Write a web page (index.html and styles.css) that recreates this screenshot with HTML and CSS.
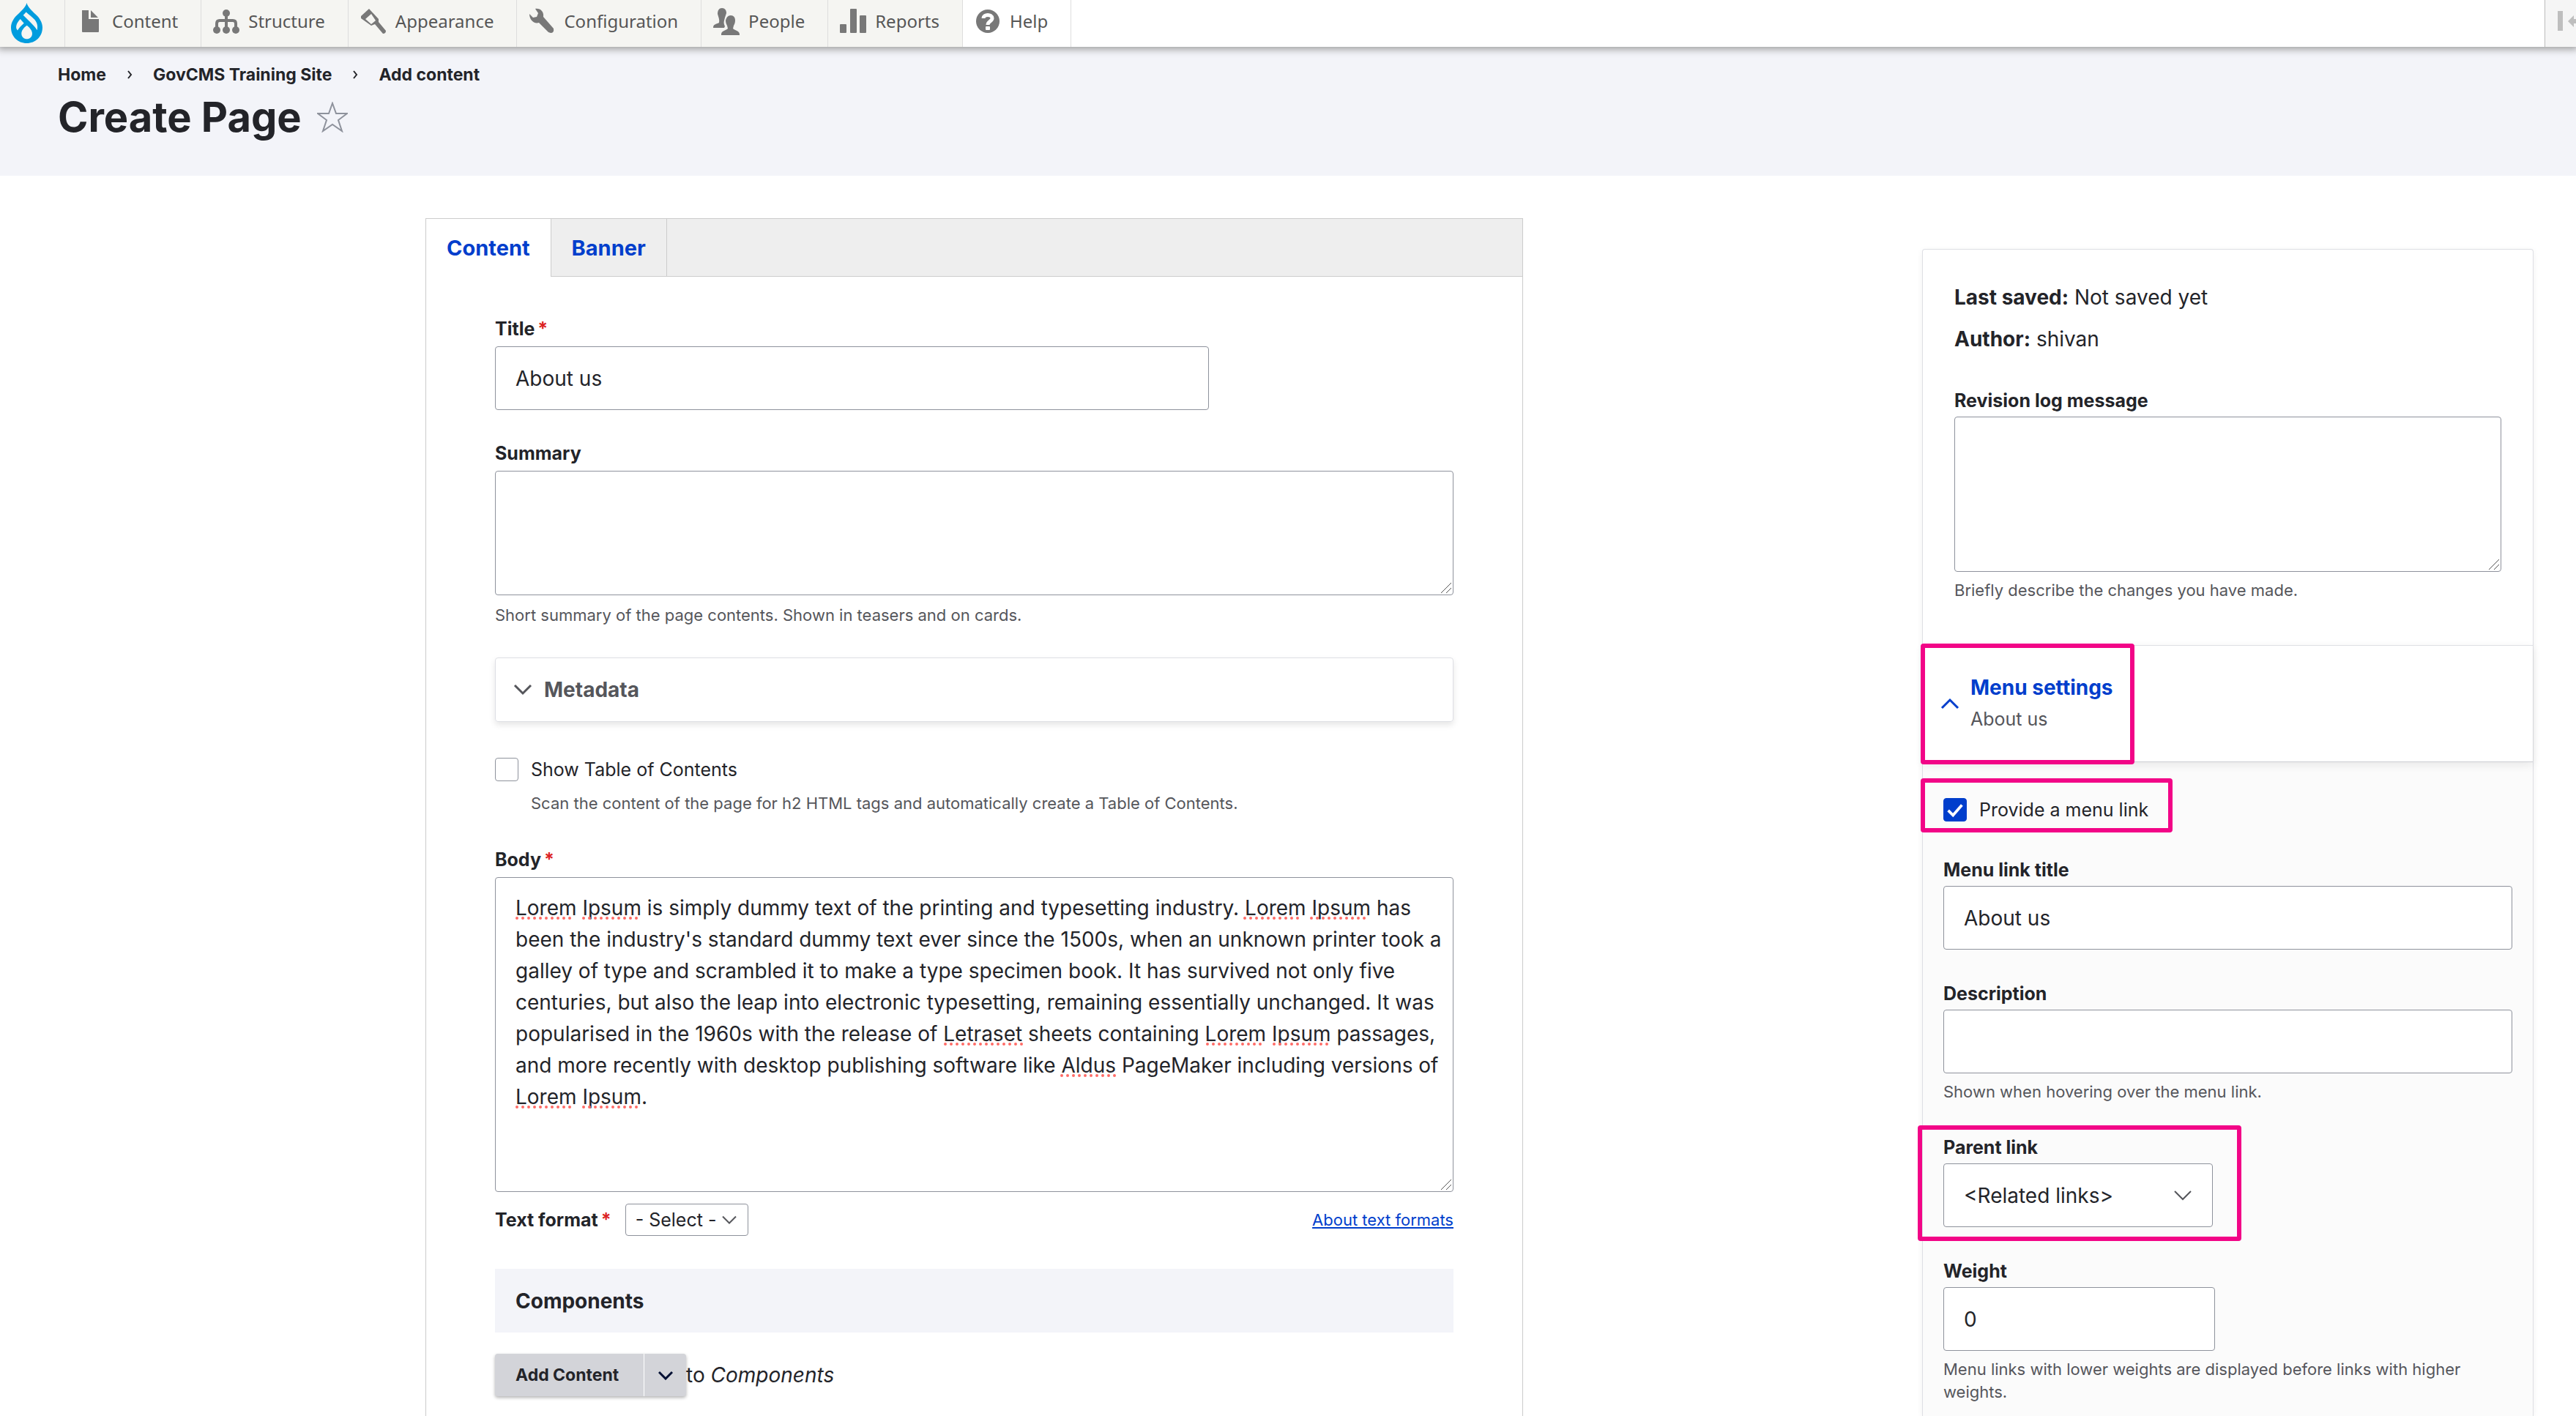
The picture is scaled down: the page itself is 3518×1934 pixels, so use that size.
FILE: index.html
```html
<!DOCTYPE html>
<html lang="en">
<head>
<meta charset="utf-8">
<meta name="viewport" content="width=device-width, initial-scale=1">
<title>Create Page</title>
<link rel="stylesheet" href="styles.css">
</head>
<body>
<nav class="toolbar" aria-label="Administration">
  <a class="toolbar-home" href="#" aria-label="Drupal">
    <svg class="logo" width="43" height="55" viewBox="0 0 43 55" aria-hidden="true"><path fill="#009cde" fill-rule="evenodd" d="M21.500 0C20 6 14 11 10 15C4 20 0 27 0 33.500C0 46 9.500 55 21.500 55S43 46 43 33.500C43 27 39 20 33 15C29 11 23 6 21.500 0ZM20.700 12.500C24 16 29 19 32.500 23C35.500 27 37 31 35.700 37.300C33 32 25 25 16.700 16.700ZM12.700 22L17.700 27.700C14 31 11 34 9 37.500C5.500 34 7 28 12.700 22ZM21.700 30.700C26 34 29 38 29 42C29 46.500 25.500 49.300 21.700 49.300S14.300 46.500 14.300 42C14.300 38 17 34 21.700 30.700Z"/></svg>
  </a>
  <a class="toolbar-item" href="#">
    <svg class="icon" width="36" height="36" viewBox="0 0 36 36" aria-hidden="true"><path fill="#787878" d="M7 3h9v12h14v17a1 1 0 0 1-1 1H8a1 1 0 0 1-1-1zM19 3l10 10H19z"/></svg>
    Content</a>
  <a class="toolbar-item" href="#">
    <svg class="icon" width="36" height="36" viewBox="0 0 36 36" aria-hidden="true"><g fill="#787878"><circle cx="18" cy="7" r="5"/><circle cx="5" cy="30" r="5"/><circle cx="18" cy="30" r="5"/><circle cx="31" cy="30" r="5"/></g><path fill="none" stroke="#787878" stroke-width="4" d="M18 9v20M5 28v-7q0-4 4-4h18q4 0 4 4v7"/></svg>
    Structure</a>
  <a class="toolbar-item" href="#">
    <svg class="icon" width="36" height="36" viewBox="0 0 36 36" aria-hidden="true"><path fill="#787878" fill-rule="evenodd" d="M12 1L25 15L25 19L35 31Q35 35 31 35L20 22L15 24L1 14L1 11ZM15 8L7 15L15 22L21 17Z"/></svg>
    Appearance</a>
  <a class="toolbar-item" href="#">
    <svg class="icon" width="36" height="36" viewBox="0 0 36 36" aria-hidden="true"><path fill="#787878" d="M9 1C16 0 21 5 20 12L34 28Q35 34 30 34L27 33L14 20C7 22 1 16 1 8L6 13L11 12L13 7Z"/></svg>
    Configuration</a>
  <a class="toolbar-item" href="#">
    <svg class="icon" width="36" height="38" viewBox="0 0 36 38" aria-hidden="true"><path fill="#787878" d="M12 1c4 0 6 3 6 7l-2 6-1 4c-1 3 0 6 1 8l-1 2H0c0-5 4-5 8-7 1-4-1-8-2-12 0-5 2-8 6-8z"/><path fill="#787878" d="M24 11c4 0 6 3 6 7 0 3-1 5-2 7l-1 4c3 3 9 3 9 8v1H11v-1c0-5 6-5 9-8l-1-4c-1-2-2-4-2-7 1-4 3-7 7-7z"/></svg>
    People</a>
  <a class="toolbar-item" href="#">
    <svg class="icon" width="36" height="36" viewBox="0 0 36 36" aria-hidden="true"><g fill="#787878"><rect y="22" width="9" height="12" rx="1"/><rect x="14" y="1" width="9" height="33" rx="1"/><rect x="27" y="10" width="9" height="24" rx="1"/></g></svg>
    Reports</a>
  <a class="toolbar-item toolbar-item-last" href="#">
    <svg class="icon" width="36" height="36" viewBox="0 0 36 36" aria-hidden="true"><circle cx="18" cy="18" r="16" fill="#787878"/><path fill="none" stroke="#fff" stroke-width="5" d="M12 14c0-6 12-6 12 0 0 4-6 4-6 9"/><rect x="15" y="25" width="6" height="5" rx="1" fill="#fff"/></svg>
    Help</a>
  <button class="toolbar-toggle" type="button" aria-label="Vertical orientation">
    <svg width="34" height="32" viewBox="0 0 34 32" aria-hidden="true"><path fill="#bebebe" d="M1 2h7v27H1zM15 16l8-8v5h11v6H23v5z"/></svg>
  </button>
</nav>

<header class="page-header">
  <nav class="breadcrumb" aria-label="Breadcrumb">
    <a href="#">Home</a>
    <svg class="crumb-sep" width="8" height="12" viewBox="0 0 8 12" aria-hidden="true"><path fill="none" stroke="#232429" stroke-width="2" d="M2 1l4 5-4 5"/></svg>
    <a href="#">GovCMS Training Site</a>
    <svg class="crumb-sep" width="8" height="12" viewBox="0 0 8 12" aria-hidden="true"><path fill="none" stroke="#232429" stroke-width="2" d="M2 1l4 5-4 5"/></svg>
    <a href="#">Add content</a>
  </nav>
  <div class="title-row">
    <h1>Create Page</h1>
    <button class="star" type="button" aria-label="Add to shortcuts">
      <svg width="42" height="42" viewBox="0 0 42 42" aria-hidden="true"><path fill="none" stroke="#8e929c" stroke-width="2" d="M21 2L26 16H41L29 25L34 40L21 31L8 40L13 25L1 16H16Z"/></svg>
    </button>
  </div>
</header>

<form class="layout">
  <main class="editor">
    <div class="tabs">
      <a class="tab tab-active" href="#">Content</a>
      <a class="tab" href="#">Banner</a>
    </div>
    <div class="panel">
      <div class="field">
        <label class="label required" for="title">Title</label>
        <input class="control title-input" id="title" type="text" value="About us">
      </div>
      <div class="field">
        <label class="label" for="summary">Summary</label>
        <textarea class="control summary-input" id="summary"></textarea>
        <p class="help">Short summary of the page contents. Shown in teasers and on cards.</p>
      </div>
      <button class="accordion" type="button">
        <svg width="26" height="16" viewBox="0 0 26 16" aria-hidden="true"><path fill="none" stroke="#55565b" stroke-width="3" d="M2 2l11 11L24 2"/></svg>
        Metadata
      </button>
      <div class="check-row">
        <input class="check" id="toc" type="checkbox">
        <label for="toc">Show Table of Contents</label>
      </div>
      <p class="help check-help">Scan the content of the page for h2 HTML tags and automatically create a Table of Contents.</p>
      <div class="field body-field">
        <label class="label required" for="body">Body</label>
        <div class="body-wrap">
          <textarea class="control body-input" id="body" spellcheck="false">Lorem Ipsum is simply dummy text of the printing and typesetting industry. Lorem Ipsum has been the industry's standard dummy text ever since the 1500s, when an unknown printer took a galley of type and scrambled it to make a type specimen book. It has survived not only five centuries, but also the leap into electronic typesetting, remaining essentially unchanged. It was popularised in the 1960s with the release of Letraset sheets containing Lorem Ipsum passages, and more recently with desktop publishing software like Aldus PageMaker including versions of Lorem Ipsum.</textarea>
          <svg class="spelling" width="1308" height="330" viewBox="0 0 1308 330" aria-hidden="true"><path d="M30 56h80M121 56h78M1024 56h80M1115 56h78M615 228h107M973 228h80M1064 228h78M774 271h75M30 314h80M121 314h78"/></svg>
        </div>
      </div>
      <div class="format-row">
        <label class="label required" for="format">Text format</label>
        <span class="select-wrap">
          <select class="format-select" id="format"><option>- Select -</option></select>
          <svg class="format-chevron" width="20" height="13" viewBox="0 0 20 13" aria-hidden="true"><path fill="none" stroke="#55565b" stroke-width="2" d="M1 2l9 9 9-9"/></svg>
        </span>
        <a class="format-link" href="#">About text formats</a>
      </div>
      <h2 class="components-title">Components</h2>
      <div class="add-row">
        <div class="dropbutton">
          <button class="add-button" type="button">Add Content</button>
          <button class="add-toggle" type="button" aria-label="List additional actions">
            <svg width="20" height="13" viewBox="0 0 20 13" aria-hidden="true"><path fill="none" stroke="#000f33" stroke-width="3" d="M1 2l9 9 9-9"/></svg>
          </button>
        </div>
        <span>to <em>Components</em></span>
      </div>
    </div>
  </main>

  <aside class="sidebar">
    <section class="meta">
      <p class="meta-line"><strong>Last saved:</strong> Not saved yet</p>
      <p class="meta-line"><strong>Author:</strong> shivan</p>
      <div class="field meta-field">
        <label class="label" for="log">Revision log message</label>
        <textarea class="control log-input" id="log"></textarea>
        <p class="help">Briefly describe the changes you have made.</p>
      </div>
    </section>
    <div class="menu-head">
      <button class="menu-toggle" type="button">
        <svg width="26" height="16" viewBox="0 0 26 16" aria-hidden="true"><path fill="none" stroke="#003ecc" stroke-width="3" d="M2 14L13 3l11 11"/></svg>
        <span class="menu-text"><span class="menu-title">Menu settings</span><span class="menu-summary">About us</span></span>
      </button>
      <span class="mark mark-menu"></span>
    </div>
    <section class="menu-body">
      <div class="check-row">
        <input class="check" id="provide" type="checkbox" checked>
        <label for="provide">Provide a menu link</label>
        <span class="mark mark-provide"></span>
      </div>
      <div class="field">
        <label class="label" for="link-title">Menu link title</label>
        <input class="control" id="link-title" type="text" value="About us">
      </div>
      <div class="field">
        <label class="label" for="description">Description</label>
        <input class="control" id="description" type="text">
        <p class="help">Shown when hovering over the menu link.</p>
      </div>
      <div class="field parent-field">
        <label class="label" for="parent">Parent link</label>
        <span class="select-wrap">
          <select class="control parent-select" id="parent"><option>&lt;Related links&gt;</option></select>
          <svg class="parent-chevron" width="26" height="16" viewBox="0 0 26 16" aria-hidden="true"><path fill="none" stroke="#55565b" stroke-width="2" d="M2 2l11 11L24 2"/></svg>
        </span>
        <span class="mark mark-parent"></span>
      </div>
      <div class="field">
        <label class="label" for="weight">Weight</label>
        <input class="control weight-input" id="weight" type="text" inputmode="numeric" value="0">
        <p class="help">Menu links with lower weights are displayed before links with higher weights.</p>
      </div>
    </section>
  </aside>
</form>
</body>
</html>
```
FILE: styles.css
```css
*, *::before, *::after { box-sizing: border-box; }

body {
  margin: 0;
  min-height: 100vh;
  display: flex;
  flex-direction: column;
  background: #fff;
  color: #232429;
  font: 28px/43px Inter, "Liberation Sans", sans-serif;
}

h1, h2, p { margin: 0; }
a { color: inherit; text-decoration: none; }
button, input, textarea, select { font: inherit; color: inherit; }
button { border: 0; padding: 0; background: none; text-align: left; }
svg { flex: none; display: block; }

/* Toolbar */
.toolbar {
  display: flex;
  height: 64px;
  background: #fff;
  box-shadow: 0 0 10px 3px #999;
  position: relative;
  font: 24px/32px "Noto Sans", sans-serif;
  color: #565656;
}
.toolbar-home {
  width: 89px;
  padding: 4px 0 0 15px;
  background: #f5f5f2;
  border-right: 1px solid #ddd;
}
.toolbar-item {
  display: flex;
  align-items: center;
  gap: 12px;
  padding: 0 31px 6px 16px;
  background: #f5f5f2;
  border-right: 1px solid #ddd;
}
.toolbar-item-last { background: #fff; }
.toolbar-toggle {
  margin-left: auto;
  width: 43px;
  padding: 0 0 6px 16px;
  overflow: hidden;
  background: #f5f5f5;
  border-left: 1px solid #bbb;
}

/* Page header */
.page-header {
  height: 176px;
  padding: 22px 79px 0;
  background: #f3f4f9;
}
.breadcrumb {
  display: flex;
  align-items: center;
  gap: 28px;
  font-size: 23px;
  line-height: 32px;
  font-weight: 700;
}
.title-row { display: flex; align-items: center; gap: 21px; margin-top: 4px; }
h1 { font-size: 56px; line-height: 76px; font-weight: 700; }

/* Columns */
.layout {
  flex: 1;
  display: grid;
  grid-template-columns: 3fr 1fr;
  gap: 42px;
  padding: 0 58px 0 78px;
}
.editor {
  display: flex;
  flex-direction: column;
  width: 100%;
  max-width: 1499px;
  margin: 58px auto 0;
  border: 1px solid #ccc;
  border-bottom: 0;
}
.tabs { display: flex; background: #eee; box-shadow: inset 0 -1px #ccc; }
.tab {
  padding: 18px 28px;
  border-right: 1px solid #ccc;
  color: #003ecc;
  font-size: 29px;
  font-weight: 700;
}
.tab-active { background: #fff; }
.panel { padding: 55px 94px 27px; }

/* Form fields */
.field { display: flex; flex-direction: column; align-items: flex-start; }
.field + .field { margin-top: 43px; }
.label { font-size: 25px; line-height: 32px; font-weight: 700; margin-bottom: 8px; }
.required::after { content: "*"; color: #dc2323; margin-left: 4px; }
.control {
  display: block;
  width: 100%;
  padding: 20px 27px;
  border: 1px solid #8e929c;
  border-radius: 4px;
  background: #fff;
  line-height: 46px;
}
input.control, select.control { height: 87px; }
textarea.control {
  padding: 20px 10px 20px 27px;
  line-height: 43px;
  resize: none;
  background: #fff url("data:image/svg+xml,%3Csvg xmlns='http://www.w3.org/2000/svg' viewBox='0 0 16 16'%3E%3Cpath fill='none' stroke='%23555' stroke-width='1' d='M1 15L15 1M8 15l7-7'/%3E%3C/svg%3E") no-repeat right 1px bottom 1px / 16px;
}
.title-input { max-width: 975px; }
.summary-input { height: 170px; }
.body-input { height: 430px; }
.log-input { height: 212px; }
.weight-input { max-width: 371px; }
.help { font-size: 22px; line-height: 31px; color: #55565b; margin-top: 12px; }

.accordion {
  display: flex;
  align-items: center;
  gap: 16px;
  width: 100%;
  height: 88px;
  margin: 42px 0 48px;
  padding: 0 24px;
  border: 1px solid #dedfe4;
  border-radius: 4px;
  box-shadow: 0 4px 8px rgba(0, 0, 0, .1);
  color: #55565b;
  font-weight: 700;
}

.check-row {
  position: relative;
  display: flex;
  align-items: center;
  gap: 17px;
  font-size: 25px;
  line-height: 34px;
}
.check {
  appearance: none;
  width: 32px;
  height: 32px;
  margin: 0;
  border: 1px solid #8e929c;
  border-radius: 4px;
  background: #fff;
}
.check:checked {
  border-color: #003ecc;
  background: #003ecc url("data:image/svg+xml,%3Csvg xmlns='http://www.w3.org/2000/svg' viewBox='0 0 32 32'%3E%3Cpath fill='none' stroke='white' stroke-width='4' d='M6 17l7 7L26 9'/%3E%3C/svg%3E") center / 100%;
}
.check-help { margin: 14px 0 0 49px; }
.body-field { margin-top: 45px; }
.body-wrap { position: relative; width: 100%; }
.spelling {
  position: absolute;
  top: 0;
  left: 0;
  pointer-events: none;
  fill: none;
  stroke: #ff6b66;
  stroke-width: 4;
  stroke-linecap: round;
  stroke-dasharray: 0 8;
}

.format-row { display: flex; align-items: center; margin-top: 16px; }
.format-row .label { margin: 0 19px 0 0; }
.select-wrap { position: relative; display: block; }
select { appearance: none; }
.format-select {
  display: block;
  width: 168px;
  height: 44px;
  padding: 0 13px;
  border: 1px solid #8e929c;
  border-radius: 4px;
  background: #fff;
  font-size: 25px;
}
.format-chevron, .parent-chevron { position: absolute; top: 50%; transform: translateY(-50%); pointer-events: none; }
.format-chevron { right: 16px; }
.parent-chevron { right: 28px; }
.format-link {
  margin-left: auto;
  color: #003ecc;
  font-size: 22px;
  text-decoration: underline;
}
.components-title {
  margin-top: 45px;
  padding: 23px 28px 21px;
  background: #f3f4f9;
  font-size: 28px;
  line-height: 43px;
  font-weight: 700;
}
.add-row { display: flex; align-items: center; margin-top: 29px; }
.dropbutton {
  display: flex;
  height: 58px;
  border-radius: 4px;
  background: #d3d4d9;
  box-shadow: 0 2px 4px rgba(0, 0, 0, .3);
}
.add-button { width: 203px; padding-left: 28px; font-size: 23px; font-weight: 700; }
.add-toggle {
  display: flex;
  align-items: center;
  justify-content: center;
  width: 58px;
  border-left: 1px solid #fff;
}

/* Sidebar */
.sidebar {
  display: flex;
  flex-direction: column;
  margin-top: 100px;
  border: 1px solid #dedfe4;
  border-bottom: 0;
  border-radius: 4px 4px 0 0;
  box-shadow: 0 2px 8px rgba(0, 0, 0, .06);
}
.sidebar .label { margin-bottom: 6px; }
.sidebar .help { margin-top: 10px; }
.meta { padding: 44px 43px 59px; }
.meta-line + .meta-line { margin-top: 14px; }
.meta-field { margin-top: 46px; }
.menu-head {
  position: relative;
  border-top: 1px solid #dedfe4;
  border-bottom: 1px solid #ccced4;
  box-shadow: 0 4px 12px rgba(0, 0, 0, .08);
}
.menu-toggle { display: flex; align-items: center; gap: 15px; width: 100%; height: 158px; padding-left: 24px; }
.menu-text { display: flex; flex-direction: column; }
.menu-title { color: #003ecc; font-weight: 700; }
.menu-summary { color: #55565b; font-size: 25px; }
.menu-body { flex: 1; padding: 48px 28px 12px; background: #fbfbfb; }
.menu-body > .field { position: relative; margin-top: 44px; }
.menu-body > .check-row + .field { margin-top: 49px; }
.parent-field .select-wrap, .parent-select { width: 368px; }

/* Highlight frames */
.mark { position: absolute; border: 6px solid #f20587; border-radius: 4px; pointer-events: none; }
.mark-menu { left: -3px; top: -3px; width: 292px; height: 165px; }
.mark-provide { left: -31px; top: -26px; width: 344px; height: 74px; }
.mark-parent { left: -35px; top: -14px; width: 442px; height: 158px; }
```
